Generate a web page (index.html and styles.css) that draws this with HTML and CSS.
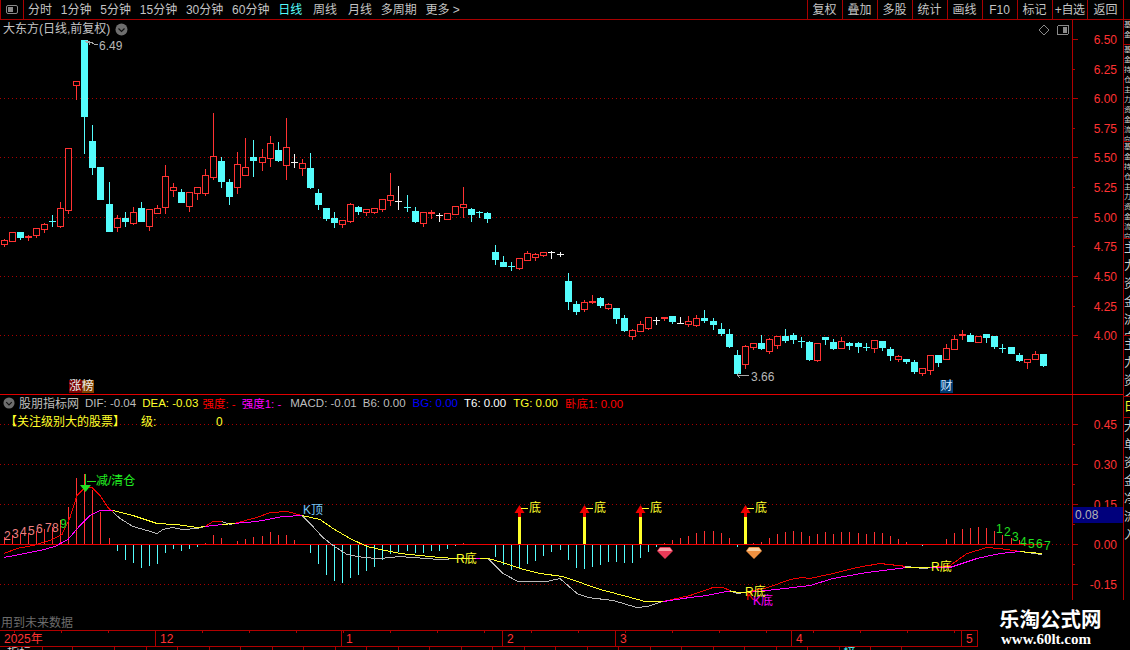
FILE: index.html
```html
<!DOCTYPE html>
<html lang="zh">
<head>
<meta charset="utf-8">
<title>大东方 日线</title>
<link rel="stylesheet" href="styles.css">
</head>
<body>
<div class="app">
  <header class="toolbar">
    <div class="toggle">
      <svg width="14" height="11" viewBox="0 0 14 11"><rect class="ico-frame" x="1.5" y="1.5" width="11" height="8" rx="1.5"/><rect class="ico-fill" x="3" y="3" width="5" height="5"/></svg>
    </div>
    <nav class="periods">
      <span>分时</span><span>1分钟</span><span>5分钟</span><span>15分钟</span><span>30分钟</span><span>60分钟</span><span class="active">日线</span><span class="wide">周线</span><span class="wide">月线</span><span>多周期</span><span>更多 &gt;</span>
    </nav>
    <nav class="tools">
      <span>复权</span><span>叠加</span><span>多股</span><span>统计</span><span>画线</span><span>F10</span><span>标记</span><span class="plus">+自选</span><span>返回</span>
    </nav>
  </header>

  <div class="workspace">
    <main class="charts">
      <section class="pane pane-price">
        <div class="pane-title">
          <span>大东方(日线,前复权)</span>
          <svg class="menu-dot" width="13" height="13" viewBox="0 0 13 13"><circle class="dot-bg" cx="6.5" cy="6.5" r="6"/><path class="dot-chev" d="M3.5 5.5l3 3 3-3"/></svg>
        </div>
        <svg class="plot" id="price" width="1123" height="374" viewBox="0 20 1123 374">
          <defs>
            <pattern id="dots" width="4" height="1" patternUnits="userSpaceOnUse"><rect class="dot" width="1" height="1"/></pattern>
          </defs>
          <g class="grid">
            <rect x="0" y="98" width="1072" height="1"/><rect x="0" y="157" width="1072" height="1"/><rect x="0" y="217" width="1072" height="1"/><rect x="0" y="276" width="1072" height="1"/><rect x="0" y="335" width="1072" height="1"/>
          </g>
          <g id="candles"></g>
          <g class="axis">
            <line x1="1072.5" x2="1072.5" y1="20" y2="394"/>
            <path d="M1073 39.500h5M1073 69.500h2M1073 98.500h5M1073 128.500h2M1073 157.500h5M1073 187.500h2M1073 217.500h5M1073 246.500h2M1073 276.500h5M1073 306.500h2M1073 335.500h5"/>
          </g>
          <g class="scale">
            <text x="1117" y="44">6.50</text><text x="1117" y="74">6.25</text><text x="1117" y="103">6.00</text><text x="1117" y="133">5.75</text><text x="1117" y="162">5.50</text><text x="1117" y="192">5.25</text><text x="1117" y="222">5.00</text><text x="1117" y="251">4.75</text><text x="1117" y="281">4.50</text><text x="1117" y="311">4.25</text><text x="1117" y="340">4.00</text>
          </g>
          <path class="grey-line" d="M85 42l4-1 1 4M86 42h5l3 2h4M737 375l3-3M737 375l3 3M737 375h12"/>
          <text class="note" x="99" y="50">6.49</text>
          <text class="note" x="751" y="381">3.66</text>
          <path class="ico-frame" d="M1044 25l5 5-5 5-5-5z"/>
          <rect class="ico-frame" x="1057.500" y="25.500" width="11" height="9" rx="1.5"/>
          <rect class="ico-fill" x="1063" y="27" width="4" height="6"/>
        </svg>
        <div class="badge badge-zhang"><span>涨</span><span>榜</span></div>
        <div class="badge badge-cai">财</div>
      </section>

      <section class="pane pane-macd">
        <div class="legend">
          <svg class="menu-dot" width="12" height="12" viewBox="0 0 13 13"><circle class="dot-bg" cx="6.5" cy="6.5" r="6"/><path class="dot-chev" d="M3.5 5.5l3 3 3-3"/></svg>
          <span class="legend-name">股朋指标网</span>
          <span class="c-grey">DIF: -0.04</span>
          <span class="c-yellow">DEA: -0.03</span>
          <span class="c-red pull">强度: -</span>
          <span class="c-magenta">强度1: -</span>
          <span class="c-grey push3">MACD: -0.01</span>
          <span class="c-grey">B6: 0.00</span>
          <span class="c-blue push1">BG: 0.00</span>
          <span class="c-white">T6: 0.00</span>
          <span class="c-yellow push1">TG: 0.00</span>
          <span class="c-red push1">卧底1: 0.00</span>
        </div>
        <div class="legend-two c-yellow">
          <span class="focus">【关注级别大的股票】</span><span class="level">级:</span><span class="zero">0</span>
        </div>
        <svg class="plot" id="macd" width="1123" height="235" viewBox="0 395 1123 235">
          <g class="grid">
            <rect x="0" y="424" width="1072" height="1"/><rect x="0" y="464" width="1072" height="1"/><rect x="0" y="504" width="1072" height="1"/><rect x="1046" y="544" width="26" height="1"/><rect x="0" y="584" width="1072" height="1"/>
          </g>
          <g id="bars"></g>
          <line class="zero-line" x1="0" x2="1046" y1="544.5" y2="544.5"/>
          <g id="lines"></g>
          <g id="signals"></g>
          <g class="axis">
            <line x1="1072.5" x2="1072.5" y1="395" y2="630"/>
            <path d="M1073 424.500h5M1073 444.500h2M1073 464.500h5M1073 484.500h2M1073 504.500h5M1073 524.500h2M1073 544.500h5M1073 564.500h2M1073 584.500h5"/>
          </g>
          <g class="scale">
            <text x="1117" y="429">0.45</text><text x="1117" y="469">0.30</text><text x="1117" y="509">0.15</text><text x="1117" y="549">0.00</text><text x="1117" y="589">-0.15</text>
          </g>
          <rect class="value-box" x="1073" y="507" width="50" height="16"/>
          <text class="value-text" x="1075" y="519">0.08</text>

          <g class="seq">
            <text x="4" y="540">2</text><text x="12" y="538">3</text><text x="20" y="536">4</text><text x="28" y="535">5</text><text x="36" y="533">6</text><text x="45" y="532">7</text><text x="52" y="532">8</text>
          </g>
          <g class="seq-green">
            <text x="60" y="528">9</text><text x="996" y="533">1</text><text x="1004" y="536">2</text><text x="1012" y="541">3</text><text x="1020" y="546">4</text><text x="1028" y="548">5</text><text x="1036" y="548">6</text><text x="1044" y="550">7</text>
          </g>
          <text class="tag tag-green" x="96" y="485">减/清仓</text>
          <text class="tag tag-blue" x="303" y="514">K顶</text>
          <text class="tag tag-yellow" x="456" y="563">R底</text>
          <text class="tag tag-red" x="746" y="600">K</text>
          <text class="tag tag-magenta" x="753" y="605">K底</text>
          <text class="tag tag-yellow" x="745" y="596">R底</text>
          <text class="tag tag-yellow" x="931" y="571">R底</text>
          <g class="gem-red">
            <path class="gem-body" d="M660 547h10l3 4-8 8-8-8z"/><path class="gem-shine" d="M660 548h10l2 3h-14z"/>
          </g>
          <g class="gem-orange">
            <path class="gem-body" d="M749 547h10l3 4-8 8-8-8z"/><path class="gem-shine" d="M749 548h10l2 3h-14z"/>
          </g>
          <text class="future" x="1" y="627">用到未来数据</text>
        </svg>
      </section>

      <div class="timeline">
        <span>2025年</span><span>12</span><span>1</span><span>2</span><span>3</span><span>4</span><span>5</span>
      </div>
      <div class="tabs">
        <span class="first"><i>指标</i></span><span class="second"><i>一</i></span><span class="third"></span><span></span><span></span><span></span><span></span><span></span><span></span><span></span><span></span><span></span><span></span><span></span><span></span><span></span><span></span><span></span><span></span><span></span><span></span><span></span><span></span><span></span><span></span><span></span><span class="cyan"><i>榜</i></span><span></span>
      </div>
    </main>
    <aside class="side">
      <div class="sec s1"><div>基</div><div>金</div></div>
      <div class="sec s2"><div>基金持仓主力资金流向</div></div>
      <div class="sec s2"><div>基金持仓主力资金流向</div></div>
      <div class="sec s3"><div>主力资金流向</div></div>
      <div class="sec s4"><div>主力资金</div></div>
      <div class="sec s5"><div>日</div></div>
      <div class="sec s6"><div>大单资金净流入</div></div>
    </aside>
  </div>

  <div class="watermark">
    <div class="wm-title">乐淘公式网</div>
    <div class="wm-url">www.60lt.com</div>
  </div>
</div>
<script src="chart.js"></script>
</body>
</html>
```

FILE: styles.css
```css
* { box-sizing: border-box; }
html, body { margin: 0; background: #000; }
body {
  font: 12px "Liberation Sans", "Noto Sans CJK SC", sans-serif;
  color: #c4c4c4;
  overflow: hidden;
}
.app { position: relative; width: 1130px; height: 650px; overflow: hidden; }

.toolbar {
  display: flex;
  align-items: stretch;
  height: 20px;
  border-bottom: 1px solid #a80000;
  line-height: 21px;
}
.toggle {
  width: 24px;
  border-left: 1px solid #a80000;
  border-right: 1px solid #a80000;
  padding: 4px 0 0 4px;
}
.toggle svg { display: block; }
.ico-frame { fill: none; stroke: #8a8a8a; stroke-width: 1; }
.ico-fill { fill: #8a8a8a; }
.periods { display: flex; gap: 8.800px; padding-left: 4px; white-space: nowrap; }
.periods .active { color: #54fcfc; }
.periods .wide { margin-left: 2px; }
.tools { display: flex; margin-left: auto; margin-right: 6px; }
.tools span {
  width: 35px;
  border-left: 1px solid #a80000;
  text-align: center;
  white-space: nowrap;
}
.tools span:last-child { width: 37px; border-right: 1px solid #a80000; }
.tools .plus { width: 35.500px; letter-spacing: -.3px; }

.workspace { display: flex; height: 630px; }
.charts { width: 1123px; flex: none; }
.pane { position: relative; }
.plot { display: block; shape-rendering: crispEdges; }
.pane-price { height: 375px; border-bottom: 1px solid #e00000; }
.pane-macd { height: 235px; }

.pane-title {
  position: absolute;
  left: 3px;
  top: 1px;
  display: flex;
  align-items: center;
  gap: 5px;
  line-height: 17px;
  white-space: nowrap;
}
.menu-dot { display: block; flex: none; }
.dot-bg { fill: #6e6e6e; shape-rendering: auto; }
.dot-chev { fill: none; stroke: #111; stroke-width: 1.200; shape-rendering: auto; }

.dot { fill: #a80000; }
.grid rect { fill: url(#dots); }
.axis line, .axis path { stroke: #b00000; fill: none; }
.scale text { fill: #ff3232; font-size: 12px; text-anchor: end; }
.grey-line { stroke: #a8a8a8; fill: none; }
.note { fill: #b8b8b8; font-size: 12px; }

.badge {
  position: absolute;
  top: 360px;
  height: 13px;
  display: flex;
  font-size: 12px;
  line-height: 13px;
  color: #eee;
}
.badge-zhang { left: 69px; }
.badge-zhang span { width: 12.500px; text-align: center; background: #7a0000; }
.badge-zhang span + span { background: #804000; }
.badge-cai { left: 940px; width: 13px; justify-content: center; background: #003a70; color: #cfe6ff; }

.legend {
  position: absolute;
  left: 3px;
  top: 0;
  display: flex;
  align-items: center;
  gap: 6px;
  height: 15px;
  white-space: nowrap;
  font-size: 11.500px;
}
.legend .pull { margin-left: -2px; }
.legend .push3 { margin-left: 3px; }
.legend .push1 { margin-left: 1px; }
.legend-name { font-size: 12px; margin-left: -2px; color: #bdbdbd; }
.legend-two {
  position: absolute;
  left: 5px;
  top: 19px;
  display: flex;
  line-height: 16px;
  white-space: nowrap;
}
.level { margin-left: 22px; width: 75px; }
.focus { width: 114px; }
.c-grey { color: #bdbdbd; }
.c-yellow { color: #ffff2a; }
.c-red { color: #ff0000; }
.c-magenta { color: #ff00ff; }
.c-blue { color: #0000ff; }
.c-white { color: #fff; }

.zero-line { stroke: #f00000; }
.value-box { fill: #00007c; }
.value-text { fill: #b4b4b4; font-size: 12px; }
.seq text { fill: #f08080; font-size: 12px; }
.seq-green text { fill: #22e022; font-size: 12px; }
.tag { font-size: 12px; }
.tag-green { fill: #22f022; }
.tag-blue { fill: #74c4f4; }
.tag-yellow { fill: #ffff2a; }
.tag-red { fill: #f00000; }
.tag-magenta { fill: #ff00ff; }
.future { fill: #6c6c6c; font-size: 12px; }
.gem-body, .gem-shine { shape-rendering: auto; }
.gem-red .gem-body { fill: #e83a58; }
.gem-red .gem-shine { fill: #f7a0a8; }
.gem-orange .gem-body { fill: #ee9040; }
.gem-orange .gem-shine { fill: #f8cfa0; }

.fill-up { fill: #ff3232; }
.fill-down { fill: #54fcfc; }
.fill-flat { fill: #f4f4f4; }
.hollow { fill: #000; stroke: #ff3232; }
.dif-up { stroke: #f00000; fill: none; }
.dif-down { stroke: #b8b8b8; fill: none; }
.dea-up { stroke: #ff00ff; fill: none; }
.dea-down { stroke: #ffff2a; fill: none; }
.yellow-bar { fill: #ffff2a; }
.arrow-red { fill: #f00000; shape-rendering: auto; }
.arrow-green { fill: #22e022; shape-rendering: auto; }
.arrow-stem-red { fill: #f00000; }
.arrow-stem-green { fill: #22e022; }
.bottom-char { fill: #ffff2a; font-size: 12px; }

.timeline {
  display: grid;
  grid-template-columns: 156px 186px 161px 113px 176px 170px 16px;
  width: 978px;
  height: 17px;
  border-top: 1px solid #b00000;
  border-bottom: 1px solid #b00000;
  background: repeating-linear-gradient(90deg, #b00000 0 1px, transparent 1px 47px) 14px 0 / 100% 2px no-repeat;
  color: #ff3232;
  font-size: 12px;
  line-height: 16px;
}
.timeline span { padding-left: 4px; border-right: 1px solid #b00000; white-space: nowrap; }

.tabs { display: flex; width: 978px; height: 4px; overflow: hidden; }
.tabs span { width: 31.500px; flex: none; border-right: 1px solid #a80000; overflow: hidden; }
.tabs i { display: block; font-style: normal; line-height: 14px; margin-top: -1px; color: #ccc; padding-left: 7px; white-space: nowrap; }
.tabs .first { width: 43px; }
.tabs .second { width: 30px; }
.tabs .third { width: 42px; }
.tabs .cyan { width: 31px; }
.tabs .cyan i { color: #54fcfc; padding-left: 4px; }

.side {
  width: 7px;
  flex: none;
  border-left: 1px solid #a80000;
  overflow: hidden;
  color: #d0d0d0;
}
.sec { overflow: hidden; border-bottom: 1px solid #a80000; }
.sec div { width: 12px; font-size: 12px; line-height: 18px; }
.s1 { height: 25px; }
.s2 { height: 97px; }
.s3 { height: 97px; }
.s4 { height: 61px; }
.s5 { height: 21px; color: #ffff2a; }
.s6 { height: 182px; border-bottom: 0; }
.s1 div, .s2 div { width: 7px; font-size: 7px; line-height: 10px; }
.s5 div { line-height: 20px; }

.watermark {
  position: absolute;
  left: 978px;
  top: 600px;
  width: 152px;
  height: 50px;
  background: #000;
  color: #fff;
  padding: 7px 0 0 21px;
}
.wm-title {
  font: 700 20.500px/22px "Noto Sans CJK SC", sans-serif;
  white-space: nowrap;
}
.wm-url {
  font: 700 15px/16px "Liberation Serif", serif;
  margin: 2px 0 0 2px;
  white-space: nowrap;
}
```

FILE: chart.js
```js
var NS = 'http://www.w3.org/2000/svg';
function el(parent, tag, attrs, text) {
  var n = document.createElementNS(NS, tag);
  for (var k in attrs) n.setAttribute(k, attrs[k]);
  if (text) n.textContent = text;
  parent.appendChild(n);
  return n;
}
function xAt(i) { return Math.floor(4.3 + 8.054 * i); }
function vbar(parent, x, y1, y2, cls) {
  el(parent, 'rect', { x: x, y: y1, width: 1, height: y2 - y1, 'class': cls });
}

/* type, high, body top, body bottom, low  (page y coordinates)
   u hollow red, d solid cyan, w white cross, c cyan cross, r solid red */
var K = [
['u',239,240,244,246],['u',232,232,241,241],['d',232,232,237,239],['r',235,236,238,240],['u',228,228,235,237],['u',223,224,229,232],
['c',215,221,221,226],['u',202,208,226,227],['u',148,148,210,213],['u',81,81,85,99],['d',40,40,116,153],['d',125,141,167,174],
['d',167,167,199,199],['d',182,204,231,231],['u',215,218,227,231],['d',212,218,221,226],['u',207,212,223,224],['d',202,208,221,221],
['u',209,209,226,230],['u',205,208,213,213],['u',165,176,207,213],['u',183,187,190,196],['d',189,192,202,202],['u',192,192,206,211],
['u',187,187,193,199],['u',169,175,193,195],['u',113,156,177,179],['d',157,161,181,187],['d',179,182,196,204],['u',152,164,187,193],
['u',138,167,175,175],['d',140,157,160,176],['u',149,157,162,170],['u',136,143,158,166],['d',142,150,160,161],['u',118,147,165,179],
['w',154,162,162,167],['u',159,163,168,175],['d',153,168,187,188],['d',189,193,204,209],['d',208,208,218,220],
['d',212,218,222,227],['u',220,220,224,227],['u',203,204,221,222],['d',206,207,211,214],['u',209,209,212,215],['u',208,208,212,213],
['u',199,199,209,211],['u',173,195,200,205],['w',186,201,201,209],['c',195,207,207,211],['d',207,211,221,222],['u',212,212,223,226],
['r',210,212,214,218],['w',213,215,215,221],['u',213,213,219,219],['u',206,206,214,214],['u',187,204,207,217],['d',208,209,214,221],
['c',211,212,212,217],['d',212,213,218,222],['d',245,252,259,264],['d',256,262,266,266],['c',262,266,266,270],['u',258,258,268,269],
['u',251,253,260,260],['u',253,254,257,260],['u',252,252,255,256],['w',251,252,252,258],['w',252,254,254,256],['d',273,281,301,309],
['d',301,304,311,314],['u',300,302,309,311],['r',295,301,303,303],['d',297,298,305,307],['u',303,304,308,309],['d',308,308,318,323],
['d',315,318,330,331],['u',329,330,336,339],['u',321,324,331,331],['u',317,317,328,329],['w',317,320,320,324],
['r',317,317,319,320],['d',316,316,321,323],['w',317,323,323,323],['u',316,321,324,326],['u',315,318,325,326],['d',310,318,320,322],
['d',318,321,324,329],['d',323,329,333,335],['d',329,334,346,347],['d',350,355,373,373],['u',345,346,364,368],['u',343,343,347,349],
['d',335,343,348,349],['u',338,339,351,353],['u',336,336,345,348],['d',329,336,340,342],['d',333,335,339,343],['c',337,341,341,347],
['d',341,342,359,360],['u',343,343,360,361],['d',337,337,339,344],['d',339,342,348,349],['u',337,341,348,348],['d',342,343,345,349],
['d',342,343,346,352],['c',343,347,347,350],['u',340,340,348,352],['d',341,341,347,350],['d',347,349,355,360],['u',355,356,359,361],
['d',359,359,361,363],['d',360,362,371,373],['u',368,368,373,375],['u',355,355,370,374],['d',355,355,362,366],['u',344,348,359,359],
['u',335,339,349,349],['r',330,334,336,339],['d',333,335,341,341],['u',336,336,342,342],['d',334,334,337,342],['d',336,336,346,348],
['c',344,348,348,352],['d',347,347,353,353],['d',353,355,360,361],['u',359,359,362,368],['u',351,354,359,359],['d',354,354,365,366]
];

var candles = document.getElementById('candles');
K.forEach(function (c, i) {
  var x = xAt(i), t = c[0], hi = c[1], top = c[2], bot = c[3], lo = c[4];
  var fill = t === 'u' || t === 'r' ? 'fill-up' : t === 'w' ? 'fill-flat' : 'fill-down';
  if (lo > hi) vbar(candles, x, hi, lo + 1, fill);
  if (t === 'u') {
    el(candles, 'rect', { x: x - 2.5, y: top + .5, width: 6, height: Math.max(bot - top, 2), 'class': 'hollow' });
  } else if (t === 'd') {
    el(candles, 'rect', { x: x - 3, y: top, width: 7, height: bot - top + 1, 'class': fill });
  } else if (t === 'r') {
    el(candles, 'rect', { x: x - 3, y: top, width: 7, height: bot - top, 'class': fill });
  } else {
    el(candles, 'rect', { x: x - 3, y: top, width: 7, height: 1, 'class': fill });
  }
});

/* histogram: end y of each bar; baseline is 544 */
var H = [537,535,534,533,531,529,527,520,507,478,474,490,512,538,551,560,563,568,566,564,553,549,551,549,547,543,535,538,544,541,539,537,536,532,535,535,540,544,553,564,575,581,583,578,575,571,567,560,554,552,551,553,553,551,551,549,546,543,544,544,544,557,565,570,568,564,561,556,552,550,560,568,569,567,565,562,562,563,563,558,552,547,543,540,538,536,533,531,531,533,538,547,544,543,542,538,534,532,531,532,536,534,532,534,532,532,533,534,532,533,536,539,542,544,546,544,544,539,533,529,528,527,528,531,535,538,540];
var bars = document.getElementById('bars');
H.forEach(function (y, i) {
  if (y === 544) return;
  vbar(bars, xAt(i), Math.min(y, 544), Math.max(y, 545), y < 544 ? 'fill-up' : 'fill-down');
});

var DIF = [[4,553],[17,548],[33,545],[50,540],[62,534],[70,517],[77,495],[85,487],[92,487],[100,495],[108,507],[120,518],[133,526],[147,530],[157,533],[163,529],[172,527],[182,529],[197,528],[205,526],[213,521],[222,521],[230,524],[238,522],[257,517],[270,512],[287,511],[302,515],[310,523],[323,537],[333,545],[347,554],[363,557],[380,558],[400,556],[440,559],[457,558],[488,558],[503,573],[518,581],[547,581],[560,578],[577,593],[588,597],[613,600],[637,607],[647,606],[663,601],[690,595],[713,587],[723,587],[737,593],[745,592],[768,587],[790,579],[802,577],[810,578],[833,573],[857,567],[880,563],[907,566],[923,568],[950,565],[967,553],[987,547],[1000,548],[1020,551],[1042,554]];
var DEA = [[4,557],[20,554],[40,550],[55,546],[68,539],[80,525],[90,515],[100,510],[113,510],[133,515],[157,523],[177,524],[197,527],[213,525],[233,523],[257,521],[283,516],[302,515],[320,519],[333,528],[350,538],[367,546],[380,549],[400,553],[440,557],[457,558],[488,558],[503,562],[520,568],[540,573],[563,576],[583,583],[600,589],[627,596],[645,601],[663,601],[690,597],[707,595],[727,591],[745,592],[767,590],[793,587],[810,585],[833,578],[867,572],[907,567],[950,567],[977,558],[1000,553],[1020,551],[1042,553]];
var UP = [[0,113],[205,222],[235,302],[470,480],[663,730],[750,905],[930,1020]];

function yOn(pts, x) {
  for (var i = 1; i < pts.length; i++) {
    if (x <= pts[i][0]) {
      var a = pts[i - 1], b = pts[i];
      return a[1] + (b[1] - a[1]) * (x - a[0]) / (b[0] - a[0]);
    }
  }
  return pts[pts.length - 1][1];
}
function isUp(x) {
  return UP.some(function (r) { return x >= r[0] && x < r[1]; });
}
function drawLine(pts, upClass, downClass) {
  var group = document.getElementById('lines');
  var run = [], state = isUp(4);
  for (var x = 4; x <= 1042; x++) {
    var s = isUp(x);
    var p = x + ',' + (yOn(pts, x) + .5).toFixed(1);
    run.push(p);
    if (s !== state || x === 1042) {
      el(group, 'polyline', { points: run.join(' '), 'class': state ? upClass : downClass });
      run = [p];
      state = s;
    }
  }
}
drawLine(DIF, 'dif-up', 'dif-down');
drawLine(DEA, 'dea-up', 'dea-down');

var signals = document.getElementById('signals');
[64, 72, 79, 92].forEach(function (i) {
  var x = xAt(i);
  el(signals, 'rect', { x: x - 1, y: 517, width: 3, height: 27, 'class': 'yellow-bar' });
  el(signals, 'rect', { x: x - 1, y: 510, width: 3, height: 7, 'class': 'arrow-stem-red' });
  el(signals, 'path', { d: 'M' + (x + .5) + ' 505l5 8h-10z', 'class': 'arrow-red' });
  el(signals, 'rect', { x: x + 2, y: 508, width: 7, height: 1, 'class': 'yellow-bar' });
  el(signals, 'text', { x: x + 10, y: 512, 'class': 'bottom-char' }, '底');
});
vbar(signals, 85, 474, 486, 'arrow-stem-green');
el(signals, 'path', { d: 'M80 485h11l-5.500 7z', 'class': 'arrow-green' });
el(signals, 'rect', { x: 87, y: 481, width: 9, height: 1, 'class': 'arrow-stem-green' });
```
